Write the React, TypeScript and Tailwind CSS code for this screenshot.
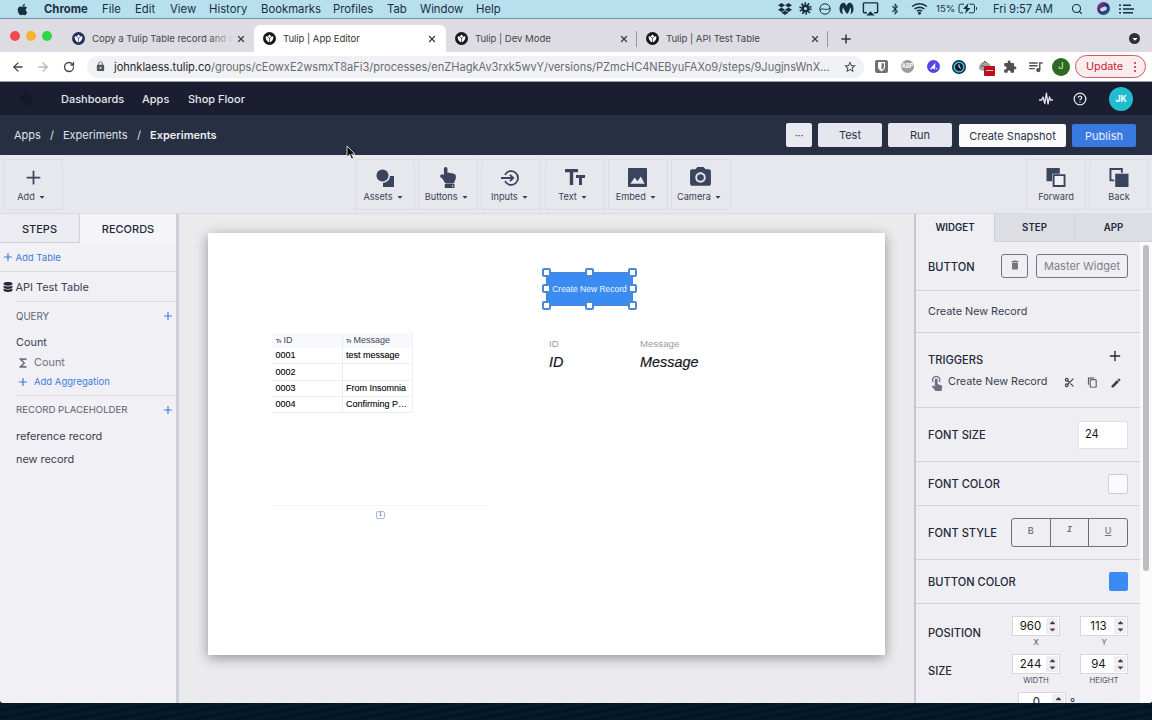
import type { ReactNode } from "react";
import { ArrowLeft, ArrowRight, CircleHelp, Plus, RotateCw, Scissors, Search, X } from "lucide-react";
import {
  FaApple,
  FaBluetoothB,
  FaCaretDown,
  FaCaretUp,
  FaDatabase,
  FaDropbox,
  FaHandPointUp,
} from "react-icons/fa";
import {
  MdAirplay,
  MdContentCopy,
  MdDelete,
  MdEdit,
  MdExtension,
  MdFunctions,
  MdLock,
  MdPhotoCamera,
  MdQueueMusic,
  MdStarBorder,
} from "react-icons/md";

const menus = [
  { label: "Chrome", cls: "w-[58px] font-bold" },
  { label: "File", cls: "w-[33px]" },
  { label: "Edit", cls: "w-[35px]" },
  { label: "View", cls: "w-[39px]" },
  { label: "History", cls: "w-[52px]" },
  { label: "Bookmarks", cls: "w-[72px]" },
  { label: "Profiles", cls: "w-[54px]" },
  { label: "Tab", cls: "w-[33px]" },
  { label: "Window", cls: "w-[56px]" },
  { label: "Help", cls: "w-[30px]" },
];

const rows = [
  { id: "0001", message: "test message" },
  { id: "0002", message: "" },
  { id: "0003", message: "From Insomnia" },
  { id: "0004", message: "Confirming P…" },
];

function TulipMark({ bg, fg = "#ffffff" }: { bg: string; fg?: string }) {
  return (
    <svg viewBox="0 0 26 26" className="h-[13px] w-[13px] shrink-0">
      <circle cx="13" cy="13" r="13" fill={bg} />
      <path d="M13 5 16.400 8.500 13 12 9.600 8.500Z" fill={fg} />
      <path d="M5.200 9.200 8.400 8.400 12.400 13v8.200C8 19.500 5 15 5.200 9.200Z" fill={fg} />
      <path d="M20.800 9.200 17.600 8.400 13.600 13v8.200C18 19.500 21 15 20.800 9.200Z" fill={fg} />
    </svg>
  );
}

function MenuBar() {
  return (
    <div className="flex h-[19px] shrink-0 items-center border-b border-[#6f94a6] bg-[#b8dfee] text-[11.300px] text-[#17303d]">
      <FaApple className="ml-4 mr-[15px] h-[13px] w-[13px]" />
      {menus.map((m) => (
        <span key={m.label} className={`shrink-0 whitespace-nowrap pt-px ${m.cls}`}>
          {m.label}
        </span>
      ))}
      <div className="ml-auto flex items-center">
        <FaDropbox className="h-[14px] w-[14px]" />
        <svg viewBox="0 0 14 14" className="ml-[7px] h-[13px] w-[13px]" fill="none" stroke="currentColor">
          <circle cx="7" cy="7" r="3.200" strokeWidth="3" />
          <circle cx="7" cy="7" r="5.600" strokeWidth="2.200" strokeDasharray="1.700 1.818" />
        </svg>
        <svg viewBox="0 0 12 12" className="ml-[7px] h-3 w-3" fill="none" stroke="currentColor">
          <circle cx="6" cy="6" r="5.200" />
          <path d="M1 6.800c3-2.400 6 1.400 10-1.600" />
        </svg>
        <svg viewBox="0 0 15 13" className="ml-2 h-[13px] w-[15px]" fill="currentColor">
          <path d="M.5 7C.5 3 2.500.8 4.500.8c1.600 0 2.400 1.600 3 3.400.6-1.800 1.600-3.400 3.200-3.400 2.200 0 3.800 2.400 3.800 6.200 0 3-1.200 4.600-3 5.200.8-2.400.9-4.600 0-7-.9 2.200-1.800 4.800-2.600 6.200H7.400L4 5.400c-.9 2-.9 4.400.1 6.800C1.800 11.600.5 10 .5 7Z" />
        </svg>
        <MdAirplay className="ml-2 h-[17px] w-[17px]" />
        <FaBluetoothB className="ml-[11px] h-3 w-[10px]" />
        <svg viewBox="0 0 18 14" className="ml-[11px] h-[13px] w-[17px]" fill="none" stroke="currentColor" strokeWidth="1.600">
          <path d="M1 4.800c4.600-4 11.400-4 16 0M3.700 7.500c3-2.600 7.600-2.600 10.600 0M6.200 10c1.600-1.300 4-1.300 5.600 0" />
          <circle cx="9" cy="12.200" r=".8" fill="currentColor" />
        </svg>
        <span className="ml-2 w-[22px] whitespace-nowrap pt-px text-[9.600px]">15%</span>
        <svg viewBox="0 0 20 11" className="h-[11px] w-5" fill="none" stroke="currentColor">
          <path d="M6 1.200H2.500a1.500 1.500 0 0 0-1.500 1.500v5.600a1.500 1.500 0 0 0 1.500 1.500H5M11.500 1.200H15a1.500 1.500 0 0 1 1.500 1.500v5.600a1.500 1.500 0 0 1-1.500 1.500h-4M18.500 4.200v2.600" />
          <path d="M10.500 0 5 6h3.200L7 11l5.500-6H9.300Z" fill="currentColor" stroke="none" />
        </svg>
        <span className="ml-[15px] w-[60px] whitespace-nowrap pt-px text-[11.200px] tracking-[-0.1px]">Fri 9:57 AM</span>
        <Search className="ml-[18px] h-3 w-3" strokeWidth={2.200} />
        <span className="ml-[14px] flex h-[13px] w-[13px] items-center justify-center rounded-full bg-gradient-to-br from-[#b0357a] via-[#2a2b6b] to-[#1c6f9c]">
          <span className="h-1 w-[7px] rotate-[-20deg] rounded-full bg-[#c9d8f5]" />
        </span>
        <svg viewBox="0 0 15 10" className="ml-[9px] mr-[18px] h-[10px] w-[15px]" stroke="currentColor" strokeWidth="1.400">
          <path d="M0 1.200h2M4 1.200h8M0 5h2M4 5h11M0 8.800h2M4 8.800h10" />
        </svg>
      </div>
    </div>
  );
}

interface BrowserTabProps {
  title: string;
  bg: string;
  active?: boolean;
  separator?: boolean;
  fade?: boolean;
}

function BrowserTab({ title, bg, active, separator, fade }: BrowserTabProps) {
  return (
    <div className={`flex h-[27px] shrink-0 items-center ${active ? "w-[192px] rounded-t-md bg-white pl-[9px]" : "w-[191px]"} ${separator ? "pl-[9px]" : ""}`}>
      <TulipMark bg={bg} />
      <span className={`relative ml-[7px] w-[141px] overflow-hidden whitespace-nowrap pt-px text-[9.600px] tracking-[-0.05px] ${active ? "text-[#33343a]" : "text-[#45464d]"}`}>
        {title}
        {fade && <span className="absolute inset-y-0 right-0 w-6 bg-gradient-to-r from-transparent to-[#dcdce2]" />}
      </span>
      <X className="ml-[3px] h-[10px] w-[10px] shrink-0 text-[#3a3b40]" strokeWidth={3} />
      {separator && <span className="ml-auto h-4 w-px bg-[#96979e]" />}
    </div>
  );
}

function TabStrip() {
  return (
    <div className="flex h-[33px] shrink-0 items-end bg-[#dcdce2]">
      <div className="flex w-[72px] items-center gap-[6px] self-center pl-[10px]">
        <span className="h-[10px] w-[10px] rounded-full bg-[#f4484f]" />
        <span className="h-[10px] w-[10px] rounded-full bg-[#f6b32d]" />
        <span className="h-[10px] w-[10px] rounded-full bg-[#2fd744]" />
      </div>
      <div className="flex w-[182px]">
        <BrowserTab title="Copy a Tulip Table record and c" bg="#22305f" fade />
      </div>
      <BrowserTab title="Tulip | App Editor" bg="#15161c" active />
      <BrowserTab title="Tulip | Dev Mode" bg="#15161c" separator />
      <BrowserTab title="Tulip | API Test Table" bg="#15161c" separator />
      <div className="flex h-[27px] flex-1 items-center">
        <Plus className="ml-[11px] h-[14px] w-[14px] text-[#33343a]" strokeWidth={2.600} />
        <span className="ml-auto mr-3 flex h-[11px] w-[11px] items-center justify-center rounded-full bg-[#2f3036]">
          <FaCaretDown className="h-2 w-2 text-white" />
        </span>
      </div>
    </div>
  );
}

function AddressBar() {
  return (
    <div className="flex h-[30px] shrink-0 items-center border-b border-[#9a9ba3] bg-white">
      <ArrowLeft className="ml-[11px] h-[14px] w-[14px] shrink-0 text-[#45464b]" strokeWidth={2.200} />
      <ArrowRight className="ml-[11px] h-[14px] w-[14px] shrink-0 text-[#b4b5ba]" strokeWidth={2.200} />
      <RotateCw className="ml-[13px] h-[12px] w-[12px] shrink-0 text-[#45464b]" strokeWidth={2.600} />
      <div className="ml-3 flex h-[22px] w-[777px] shrink-0 items-center rounded-full bg-[#f0f1f4] text-[#6a6b71]">
        <MdLock className="ml-2 h-[11px] w-[11px] text-[#55565c]" />
        <span className="ml-2 w-[729px] whitespace-nowrap pt-px text-[11.050px]">
          <span className="text-[#26272b]">johnklaess.tulip.co</span>
          /groups/cEowxE2wsmxT8aFi3/processes/enZHagkAv3rxk5wvY/versions/PZmcHC4NEByuFAXo9/steps/9JugjnsWnX...
        </span>
        <MdStarBorder className="h-[14px] w-[14px] shrink-0 text-[#45464b]" />
      </div>
      <div className="ml-[11px] flex items-center">
        <svg viewBox="0 0 13 13" className="h-[13px] w-[13px]">
          <rect width="13" height="13" rx="2" fill="#707175" />
          <path d="M3 2h7v5c0 2-1.600 3.200-3.500 4.200C4.600 10.200 3 9 3 7Z" fill="#fff" />
          <path d="M6.500 3.200h2.400V7c0 1.200-1 2-2.400 2.800Z" fill="#707175" />
        </svg>
        <span className="ml-[13px] flex h-[13px] w-[13px] items-center justify-center rounded-full bg-[#9c9c9f] text-[5.500px] font-bold text-white">ABP</span>
        <svg viewBox="0 0 13 13" className="ml-[13px] h-[13px] w-[13px]">
          <circle cx="6.500" cy="6.500" r="6.500" fill="#5446e6" />
          <path d="M2.800 9.200 8.200 3v6.200H6.400V7.400L4.800 9.200Z" fill="#fff" />
          <circle cx="9.500" cy="8.600" r=".7" fill="#fff" />
        </svg>
        <svg viewBox="0 0 14 14" className="ml-3 h-[14px] w-[14px]">
          <circle cx="7" cy="7" r="7" fill="#132a3a" />
          <circle cx="7" cy="7" r="4.800" fill="#0c1c28" stroke="#45bce6" strokeWidth="1.600" />
          <path d="M7 4.400V7l1.800 1.200" fill="none" stroke="#fff" />
        </svg>
        <span className="relative ml-3 h-[14px] w-[18px]">
          <svg viewBox="0 0 14 12" className="h-3 w-[14px]">
            <path d="M1 8c0-3.500 2.500-6 6-6s6 2.500 6 6-12 4-12 0Z" fill="#a2a3a6" />
            <path d="M4.500 3.500 7 1l2 2M3 6h3" fill="none" stroke="#5d5e62" />
          </svg>
          <span className="absolute left-[6px] top-[6px] flex h-[10px] w-[11px] items-center justify-center rounded-[1px] bg-[#b8101c]">
            <span className="h-px w-[7px] bg-[#f1b8bc]" />
          </span>
        </span>
        <MdExtension className="ml-[7px] h-[14px] w-[14px] text-[#505156]" />
        <MdQueueMusic className="ml-[10px] h-[17px] w-[17px] text-[#505156]" />
        <span className="ml-2 flex h-[18px] w-[18px] items-center justify-center rounded-full bg-[#2c6a1f] text-[9.500px] text-[#dcebd8]">J</span>
        <span className="ml-[5px] flex h-[23px] w-[71px] items-center rounded-full border border-[#cf5a66] bg-[#fbecee] pl-[10px] text-[10.800px] text-[#c02639]">
          <span className="pt-[2px]">Update</span>
          <span className="ml-auto mr-[9px] flex flex-col gap-[2px]">
            <span className="h-[2px] w-[2px] rounded-full bg-[#c02639]" />
            <span className="h-[2px] w-[2px] rounded-full bg-[#c02639]" />
            <span className="h-[2px] w-[2px] rounded-full bg-[#c02639]" />
          </span>
        </span>
      </div>
    </div>
  );
}

function AppHeader() {
  return (
    <>
      <div className="flex h-[33px] shrink-0 items-center bg-[#1a1e30] text-[11px] font-medium text-[#e4e6ee]">
        <svg viewBox="0 0 26 26" className="ml-[17px] mr-[25px] h-[19px] w-[19px]" fill="#141726">
          <path d="M13 3 17 7.500 13 12 9 7.500Z" />
          <path d="M4 9 8 8l4.400 5v9C7.500 20 4 15 4 9ZM22 9l-4-1-4.400 5v9C18.500 20 22 15 22 9Z" />
        </svg>
        <span className="w-[81px] pt-px">Dashboards</span>
        <span className="w-[46px] pt-px">Apps</span>
        <span className="pt-px">Shop Floor</span>
        <svg viewBox="0 0 14 14" className="ml-auto h-[14px] w-[14px]" fill="none" stroke="currentColor" strokeWidth="1.300" strokeLinejoin="round">
          <path d="M0 8h2.600L4 5l1.800 6.500L7.400 1.200 9 12l1.500-7L11.600 8H14" />
        </svg>
        <CircleHelp className="ml-[20px] h-[14px] w-[14px]" strokeWidth={2.200} />
        <span className="ml-[22px] mr-[19px] flex h-6 w-6 items-center justify-center rounded-full bg-[#20bdd0] pt-px text-[8.600px] font-bold text-white">JK</span>
      </div>
      <div className="flex h-10 shrink-0 items-center bg-[#263042] text-[11px] text-[#dfe2ea]">
        <span className="ml-[14px] w-[36px] pt-px">Apps</span>
        <span className="w-[13px] pt-px">/</span>
        <span className="w-[74px] pt-px">Experiments</span>
        <span className="w-[13px] pt-px">/</span>
        <span className="pt-px font-semibold text-[#eceef4]">Experiments</span>
        <div className="ml-auto mr-4 flex items-center text-[11px] text-[#2b3145]">
          <span className="flex h-6 w-[26px] items-center justify-center rounded-[2px] bg-[#e9eaf1] text-[10px]">···</span>
          <span className="ml-[6px] flex h-6 w-16 items-center justify-center rounded-[2px] bg-[#e6e7ee] pt-px">Test</span>
          <span className="ml-[6px] flex h-6 w-16 items-center justify-center rounded-[2px] bg-[#e6e7ee] pt-px">Run</span>
          <span className="ml-[7px] mt-px flex h-[23px] w-[107px] items-center justify-center rounded-[2px] bg-[#fbfbfd] pt-px">Create Snapshot</span>
          <span className="ml-[6px] mt-px flex h-[23px] w-16 items-center justify-center rounded-[2px] bg-[#3a7ae0] pt-px text-[#eaf1fd]">Publish</span>
        </div>
      </div>
    </>
  );
}

function ToolButton({ label, caret = true, children }: { label: string; caret?: boolean; children: ReactNode }) {
  return (
    <div className="flex h-[51px] w-[60px] flex-col items-center rounded-[2px] border border-[#dcdce4]">
      <div className="flex h-[31px] items-center pt-[4px] text-[#3a445b]">{children}</div>
      <div className={`flex items-center whitespace-nowrap text-[9.200px] leading-3 text-[#3b4256] ${caret ? "pr-[3px]" : ""}`}>
        {label}
        {caret && <FaCaretDown className="ml-[3px] h-2 w-2" />}
      </div>
    </div>
  );
}

function Toolbar() {
  return (
    <div className="flex h-[59px] shrink-0 items-start border-b border-[#dbdbe3] bg-[#e7e7ee] pl-[3px] pr-[3px] pt-[4px]">
      <ToolButton label="Add">
        <Plus className="h-[21px] w-[21px]" strokeWidth={2} />
      </ToolButton>
      <div className="ml-[292px] flex gap-[3.200px]">
        <ToolButton label="Assets">
          <svg viewBox="0 0 18 18" className="h-[18px] w-[18px]" fill="currentColor">
            <path d="M18 7v11H7v-4.300a6.800 6.800 0 0 0 7-6.700Z" />
            <circle cx="6.500" cy="6.500" r="6" />
          </svg>
        </ToolButton>
        <ToolButton label="Buttons">
          <FaHandPointUp className="h-[21px] w-[20px]" />
        </ToolButton>
        <ToolButton label="Inputs">
          <svg viewBox="0 0 18 16" className="mr-[2px] h-4 w-[18px]" fill="none" stroke="currentColor" strokeWidth="1.800">
            <path d="M4 4.800a6.900 6.900 0 1 1 0 6.400M0 8h12M9 4.800 12.200 8 9 11.200" />
          </svg>
        </ToolButton>
        <ToolButton label="Text">
          <svg viewBox="0 0 20 17" className="h-[17px] w-5" fill="currentColor">
            <path d="M0 0h13v3.200H8.200V16H4.800V3.200H0ZM11 6h9v3h-3v7h-3V9h-3Z" />
          </svg>
        </ToolButton>
        <ToolButton label="Embed">
          <svg viewBox="0 0 20 20" className="h-[19px] w-[19px]">
            <rect width="20" height="20" rx="1" fill="currentColor" />
            <path d="M2.500 16.500 7 10l3 4 3.500-5 4 7.500Z" fill="#e7e7ee" />
          </svg>
        </ToolButton>
        <ToolButton label="Camera">
          <MdPhotoCamera className="h-[25px] w-[25px]" />
        </ToolButton>
      </div>
      <div className="ml-auto flex gap-[3px]">
        <ToolButton label="Forward" caret={false}>
          <svg viewBox="0 0 20 20" className="h-[19px] w-5" fill="currentColor">
            <path d="M0 0h14v6H6v8H0Z" />
            <path d="M7.500 7.500h11.500v11.500H7.500Z" fill="#eef0f5" stroke="currentColor" strokeWidth="2" />
          </svg>
        </ToolButton>
        <ToolButton label="Back" caret={false}>
          <svg viewBox="0 0 20 20" className="h-[19px] w-5" fill="currentColor">
            <path d="M6 6h14v14H6Z" />
            <path d="M5 13H1V1h12v4" fill="none" stroke="currentColor" strokeWidth="2" />
          </svg>
        </ToolButton>
      </div>
    </div>
  );
}

function RecordsPanel() {
  return (
    <aside className="flex w-[179px] shrink-0 flex-col border-r-[3px] border-[#cfcfdc] bg-[#f0f0f5] text-[10.900px] text-[#3c4052]">
      <div className="flex h-[29px] shrink-0 text-[11px] font-medium text-[#23283a]">
        <div className="flex w-20 items-center justify-center border-b border-r border-[#d0d0da] bg-[#ebebf1] pt-[2px]">STEPS</div>
        <div className="flex flex-1 items-center justify-center bg-[#f5f5f9] pt-px">RECORDS</div>
      </div>
      <div className="flex h-[29px] items-center border-b border-[#d9dae2] text-[9.500px] text-[#3d7de0]">
        <Plus className="ml-[2px] mr-[1.500px] h-3 w-3" strokeWidth={2.400} />
        <span className="pt-[2px]">Add Table</span>
      </div>
      <div className="flex h-[29px] items-center pt-px">
        <FaDatabase className="ml-[3px] mr-[2.500px] h-[10px] w-[10px] text-[#20273a]" />
        API Test Table
      </div>
      <div className="ml-4 flex flex-col border-t border-[#d9dae2]">
        <div className="flex h-7 items-center justify-between pr-[2px] text-[9.700px] text-[#5d6070]">
          <span className="pt-[2px]">QUERY</span>
          <Plus className="h-3 w-3 text-[#3d7de0]" strokeWidth={2.400} />
        </div>
        <div className="flex h-6 items-center pt-px">Count</div>
        <div className="flex h-[18px] items-center pb-px text-[#6e7180]">
          <MdFunctions className="mr-[4px] h-[14px] w-[14px]" />
          Count
        </div>
        <div className="flex h-5 items-center text-[9.500px] text-[#3d7de0]">
          <Plus className="ml-px mr-[5px] h-3 w-3" strokeWidth={2.400} />
          Add Aggregation
        </div>
      </div>
      <div className="ml-4 mt-[3px] flex flex-col border-t border-[#d9dae2]">
        <div className="flex h-[28px] items-center justify-between pr-[2px] text-[9.600px] text-[#5d6070]">
          RECORD PLACEHOLDER
          <Plus className="h-3 w-3 text-[#3d7de0]" strokeWidth={2.400} />
        </div>
        <div className="flex h-6 items-center">reference record</div>
        <div className="flex h-[23px] items-center">new record</div>
      </div>
    </aside>
  );
}

function Handle({ pos }: { pos: string }) {
  return <span className={`absolute h-[9px] w-[9px] rounded-[2px] border-2 border-[#4a88d8] bg-white ${pos}`} />;
}

function TypeMark() {
  return (
    <svg viewBox="0 0 20 17" className="mr-[2px] h-[4.500px] w-[5.500px]" fill="#5a6074">
      <path d="M0 0h13v3.200H8.200V16H4.800V3.200H0ZM11 6h9v3h-3v7h-3V9h-3Z" />
    </svg>
  );
}

// Widgets are placed freely on the step, so each one carries its own offset.
function Stage() {
  return (
    <main className="flex flex-1 bg-[#ebebee] pl-[29px] pt-[19px]">
      <div className="relative h-[422px] w-[677px] bg-white font-['Liberation_Sans',Arial,sans-serif] shadow-[0_3px_12px_rgba(0,0,0,0.38)]">
        <div className="absolute left-[64px] top-[100px] w-[141px] border-r border-[#f0f0f4] text-[9px] text-black">
          <div className="flex h-[15px] items-center bg-[#f8f9fc] text-[#41475b]">
            <span className="flex h-full w-[71px] items-center border-r border-[#ececf1] pl-1 pt-px">
              <TypeMark />
              ID
            </span>
            <span className="flex items-center pl-[3px] pt-px">
              <TypeMark />
              Message
            </span>
          </div>
          {rows.map((row) => (
            <div key={row.id} className="flex h-[16.300px] items-center border-b border-[#ececf1] [-webkit-text-stroke:0.100px]">
              <span className="flex h-full w-[71px] items-center border-r border-[#ececf1] pl-[3.500px] pt-px">{row.id}</span>
              <span className="pl-[3px] pt-px">{row.message}</span>
            </div>
          ))}
        </div>
        <div className="absolute left-[64px] top-[272px] flex w-[217px] justify-center border-t border-[#f4f4f6] pt-[5px]">
          <span className="flex h-[8px] w-[9px] items-center justify-center rounded-[2px] border border-[#9dbde8] text-[5px] text-[#3c4d75]">1</span>
        </div>
        <div className="absolute left-[338px] top-[39px] flex h-[34px] w-[87px] items-center justify-center border border-[#4a86d0] bg-[#3b8cf2] pt-px text-[8.500px] whitespace-nowrap text-[#f0f6ff]">
          Create New Record
          <Handle pos="-left-[5px] -top-[5px]" />
          <Handle pos="left-[38px] -top-[5px]" />
          <Handle pos="-right-[5px] -top-[5px]" />
          <Handle pos="-left-[5px] top-[11px]" />
          <Handle pos="-right-[5px] top-[11px]" />
          <Handle pos="-left-[5px] -bottom-[5px]" />
          <Handle pos="left-[38px] -bottom-[5px]" />
          <Handle pos="-right-[5px] -bottom-[5px]" />
        </div>
        <div className="absolute left-[341px] top-[105px] flex flex-col">
          <span className="text-[9.500px] leading-3 text-[#9b9ba0]">ID</span>
          <span className="text-[14.400px] italic leading-6 text-[#15151c] [-webkit-text-stroke:0.200px]">ID</span>
        </div>
        <div className="absolute left-[432px] top-[105px] flex flex-col">
          <span className="text-[9.700px] leading-3 text-[#9b9ba0]">Message</span>
          <span className="text-[14.400px] italic leading-6 text-[#15151c] [-webkit-text-stroke:0.200px]">Message</span>
        </div>
      </div>
    </main>
  );
}

function NumberField({ value, label }: { value: string; label?: string }) {
  return (
    <div className="flex w-12 flex-col items-center">
      <div className="flex h-5 w-full items-center border border-[#d6d7df] bg-white text-[11.500px] text-[#14151b]">
        <span className="flex-1 pl-[2px] pt-px text-center">{value}</span>
        <span className="mr-px flex h-4 w-[12px] flex-col items-center justify-center bg-[#eeeef1] text-[#43444b]">
          <FaCaretUp className="-mb-[1px] h-[9px] w-[9px]" />
          <FaCaretDown className="-mt-[1px] h-[9px] w-[9px]" />
        </span>
      </div>
      {label && <span className="pt-px text-[7.700px] leading-3 text-[#4c5062]">{label}</span>}
    </div>
  );
}

const section = "flex shrink-0 items-center border-b border-[#d2d3dc] pl-3 pr-3";

function Inspector() {
  return (
    <aside className="flex w-[238px] shrink-0 flex-col overflow-hidden border-l-2 border-[#c6c7d2] bg-[#eeeef3] text-[11.100px] text-[#23283a]">
      <div className="flex h-[28px] shrink-0 text-[9.700px] font-semibold">
        <div className="flex w-[78px] items-center justify-center pt-px">WIDGET</div>
        <div className="flex w-[80px] items-center justify-center border-b border-l border-[#d0d0d9] bg-[#dddde4] pt-[2px]">STEP</div>
        <div className="flex flex-1 items-center justify-center border-b border-l border-[#d0d0d9] bg-[#dddde4] pt-[2px]">APP</div>
      </div>
      <div className="flex min-h-0 flex-1 overflow-hidden">
        <div className="flex w-[224px] shrink-0 flex-col font-medium">
          <div className={`${section} h-[49px]`}>
            <span className="pt-[2px]">BUTTON</span>
            <span className="ml-auto flex h-6 w-[27px] items-center justify-center rounded-[3px] border border-[#6f7586]">
              <MdDelete className="mb-[2px] h-[12px] w-[12px] text-[#73767f]" />
            </span>
            <span className="ml-2 flex h-6 w-[92px] items-center justify-center rounded-[3px] border border-[#6f7586] pt-px text-[11px] font-normal text-[#7b7f8c]">
              Master Widget
            </span>
          </div>
          <div className={`${section} h-[42px] pt-px font-normal text-[10.800px] text-[#3a3e4e]`}>Create New Record</div>
          <div className="flex h-[75px] shrink-0 flex-col border-b border-[#d2d3dc] pl-3 pr-[18px] pt-[13px]">
            <div className="flex h-[24px] items-center justify-between">
              <span className="pt-[4px]">TRIGGERS</span>
              <Plus className="-mr-px -mt-1 h-4 w-4" strokeWidth={2} />
            </div>
            <div className="flex h-[25px] items-center text-[10.800px] font-normal text-[#3a3e4e]">
              <svg viewBox="0 0 16 16" className="mr-1 h-4 w-4" fill="#6b7085">
                <path d="M6.800 5a1.400 1.400 0 0 1 2.800 0v4l4 1.400c.6.300.8.8.7 1.400L13.500 16H7.600L3.800 11.400l1.200-1L6.800 11.600Z" />
                <path d="M5.200 7A3.600 3.600 0 1 1 11.200 7" fill="none" stroke="#6b7085" strokeWidth="1.200" />
              </svg>
              Create New Record
              <Scissors className="ml-auto h-[11px] w-[11px]" strokeWidth={2.400} />
              <MdContentCopy className="ml-3 h-[11px] w-[11px]" />
              <MdEdit className="ml-3 h-[12px] w-[12px]" />
            </div>
          </div>
          <div className={`${section} h-[54px]`}>
            <span className="pt-px">FONT SIZE</span>
            <span className="ml-auto flex h-7 w-[50px] items-center border border-[#e0e1e8] bg-white pl-[6px] font-normal text-[#14151b]">24</span>
          </div>
          <div className={`${section} h-11`}>
            <span className="pt-px">FONT COLOR</span>
            <span className="ml-auto h-5 w-5 rounded-[2px] border border-[#cccdd5] bg-[#fafafd]" />
          </div>
          <div className={`${section} h-[54px]`}>
            <span className="pt-px">FONT STYLE</span>
            <span className="ml-auto flex h-[29px] w-[117px] divide-x divide-[#6a7082] rounded-[3px] border border-[#6a7082] text-[9px] text-[#737887]">
              <span className="flex flex-1 items-center justify-center pb-[3px] font-semibold">B</span>
              <span className="flex flex-1 items-center justify-center pb-[3px] font-['Liberation_Mono',monospace] font-bold italic">I</span>
              <span className="flex flex-1 items-center justify-center pb-[3px] underline">U</span>
            </span>
          </div>
          <div className={`${section} h-11`}>
            <span className="pt-[2px]">BUTTON COLOR</span>
            <span className="ml-auto h-[19px] w-[19px] rounded-[2px] bg-[#3b8cf2]" />
          </div>
          <div className="flex flex-col pl-3 pr-3 pt-3 font-medium">
            <div className="flex h-[38px] items-start">
              <span className="w-[84px] pt-[9px]">POSITION</span>
              <div className="flex gap-5 font-normal">
                <NumberField value="960" label="X" />
                <NumberField value="113" label="Y" />
              </div>
            </div>
            <div className="flex h-[38px] items-start">
              <span className="w-[84px] pt-[9px]">SIZE</span>
              <div className="flex gap-5 font-normal">
                <NumberField value="244" label="WIDTH" />
                <NumberField value="94" label="HEIGHT" />
              </div>
            </div>
            <div className="flex items-start pl-[90px] font-normal">
              <NumberField value="0" />
              <span className="ml-1 pt-[3px]">°</span>
            </div>
          </div>
        </div>
        <div className="flex w-3 justify-center bg-[#fafafa] pt-[3px]">
          <span className="h-[326px] w-[6px] rounded-full bg-[#bdbdc0]" />
        </div>
      </div>
    </aside>
  );
}

export default function App() {
  return (
    <div className="relative flex h-[720px] w-[1152px] flex-col overflow-hidden bg-[#041a2b] font-[Inter,sans-serif]">
      <MenuBar />
      <TabStrip />
      <AddressBar />
      <AppHeader />
      <Toolbar />
      <div className="flex h-[489px] shrink-0 overflow-hidden rounded-b-[3px]">
        <RecordsPanel />
        <Stage />
        <Inspector />
      </div>
      <div className="flex-1 bg-[repeating-linear-gradient(170deg,#03121f_0px,#061d2f_4px,#041522_7px)]" />
      <svg viewBox="0 0 10 15" className="absolute left-[346px] top-[145px] h-[15px] w-[10px]">
        <path d="M1 1v11l2.700-2.400L5.600 14l1.900-.8-1.900-4.100H9Z" fill="#0b0b0d" stroke="#dfe1e6" strokeWidth=".9" />
      </svg>
    </div>
  );
}
